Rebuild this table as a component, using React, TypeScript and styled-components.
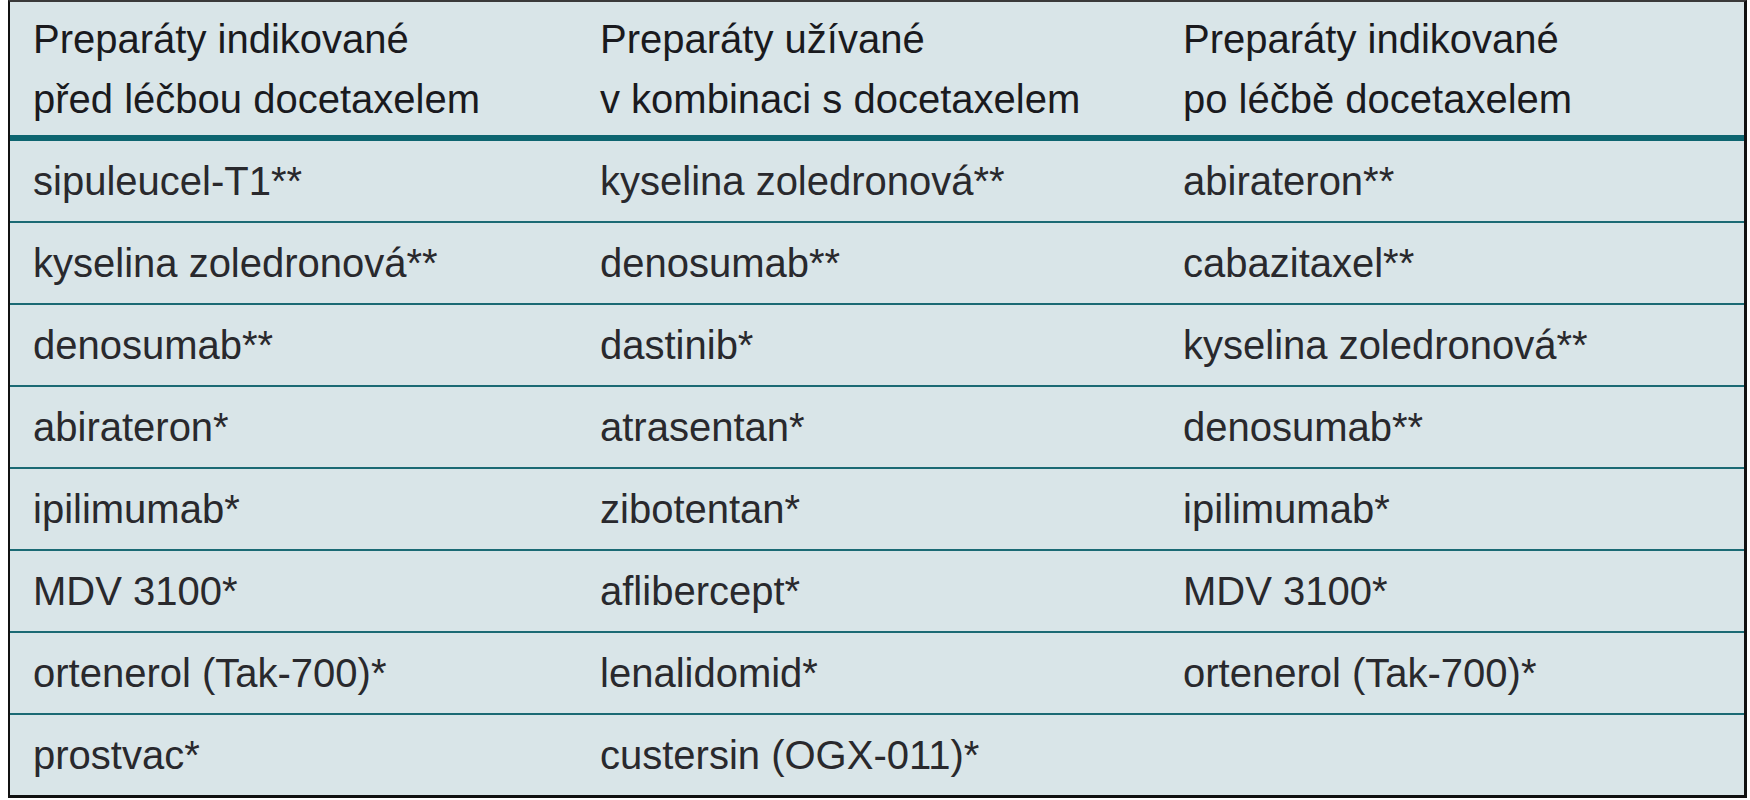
import styled, { createGlobalStyle } from 'styled-components';

const GlobalStyle = createGlobalStyle`
  html, body {
    margin: 0;
    padding: 0;
    background: #ffffff;
  }
  body {
    font-family: "Liberation Sans", Arial, sans-serif;
  }
`;

const Page = styled.div`
  padding-left: 8px;
  width: 1750px;
  height: 800px;
  box-sizing: border-box;
`;

const Table = styled.div`
  width: 1734px;
  background: #d9e5e8;
  border-top: 2px solid #3a3a3a;
  border-left: 2px solid #111;
  border-right: 3px solid #111;
  border-bottom: 3px solid #111;
  color: #2a2a2e;
`;

const Row = styled.div<{ $header?: boolean; $last?: boolean }>`
  display: grid;
  grid-template-columns: 567px 583px 1fr;
  height: ${({ $header }) => ($header ? '133px' : '80px')};
  border-bottom: ${({ $header, $last }) =>
    $header ? '6px solid #0d6570' : $last ? 'none' : '2px solid #1b6a74'};
`;

const Cell = styled.div<{ $header?: boolean }>`
  display: flex;
  flex-direction: column;
  justify-content: center;
  padding-left: 23px;
  font-size: 40px;
  line-height: ${({ $header }) => ($header ? '60px' : '44px')};
  color: ${({ $header }) => ($header ? '#1a1a1e' : '#29292d')};
  white-space: nowrap;
`;

const headers = [
  ['Preparáty indikované', 'před léčbou docetaxelem'],
  ['Preparáty užívané', 'v kombinaci s docetaxelem'],
  ['Preparáty indikované', 'po léčbě docetaxelem'],
];

const rows = [
  ['sipuleucel-T1**', 'kyselina zoledronová**', 'abirateron**'],
  ['kyselina zoledronová**', 'denosumab**', 'cabazitaxel**'],
  ['denosumab**', 'dastinib*', 'kyselina zoledronová**'],
  ['abirateron*', 'atrasentan*', 'denosumab**'],
  ['ipilimumab*', 'zibotentan*', 'ipilimumab*'],
  ['MDV 3100*', 'aflibercept*', 'MDV 3100*'],
  ['ortenerol (Tak-700)*', 'lenalidomid*', 'ortenerol (Tak-700)*'],
  ['prostvac*', 'custersin (OGX-011)*', ''],
];

export default function App() {
  return (
    <Page>
      <GlobalStyle />
      <Table>
        <Row $header>
          {headers.map((h, i) => (
            <Cell $header key={i}>
              <span>{h[0]}</span>
              <span>{h[1]}</span>
            </Cell>
          ))}
        </Row>
        {rows.map((r, i) => (
          <Row key={i} $last={i === rows.length - 1}>
            {r.map((c, j) => (
              <Cell key={j}>{c}</Cell>
            ))}
          </Row>
        ))}
      </Table>
    </Page>
  );
}
